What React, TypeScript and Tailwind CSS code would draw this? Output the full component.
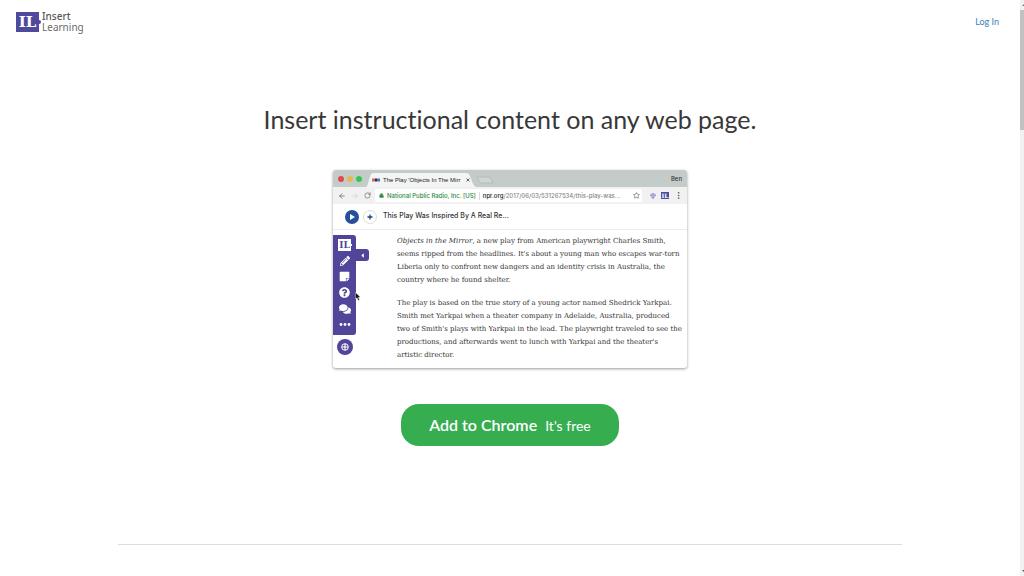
import { ArrowLeft, ArrowRight, EllipsisVertical, Gem, Lock, RotateCw, Star } from "lucide-react";
import { FaCaretLeft, FaComments, FaPencilAlt, FaQuestionCircle, FaStickyNote } from "react-icons/fa";

const paragraphs: { title?: string; lines: string[] }[] = [
  {
    title: "Objects in the Mirror",
    lines: [
      ", a new play from American playwright Charles Smith,",
      "seems ripped from the headlines. It's about a young man who escapes war-torn",
      "Liberia only to confront new dangers and an identity crisis in Australia, the",
      "country where he found shelter.",
    ],
  },
  {
    lines: [
      "The play is based on the true story of a young actor named Shedrick Yarkpai.",
      "Smith met Yarkpai when a theater company in Adelaide, Australia, produced",
      "two of Smith's plays with Yarkpai in the lead. The playwright traveled to see the",
      "productions, and afterwards went to lunch with Yarkpai and the theater's",
      "artistic director.",
    ],
  },
];

function Logo() {
  return (
    <a href="#" className="flex items-center font-['Noto_Sans',sans-serif]">
      <span className="relative flex h-5 w-[23px] items-center justify-center bg-[#4f4a9c] font-['DejaVu_Serif',serif] text-[15px] leading-5 font-bold text-white">
        IL
        <span className="absolute top-2 -right-0.5 size-1 rounded-full bg-[#4f4a9c]" />
      </span>
      <span className="ml-[3px] flex flex-col text-[10px] leading-[11px] text-[#6b6b6b]">
        <span className="font-medium text-[#555]">Insert</span>
        <span>Learning</span>
      </span>
    </a>
  );
}

function TabStrip() {
  return (
    <div className="flex h-[17px] items-end bg-[#c3ccc9] pr-[5px] pl-[5px]">
      <div className="flex gap-[3px] self-center">
        <span className="size-1.5 rounded-full bg-[#e4484f]" />
        <span className="size-1.5 rounded-full bg-[#e6b850]" />
        <span className="size-1.5 rounded-full bg-[#35c651]" />
      </div>
      <div className="relative ml-1 flex h-3.5 w-[110px] items-center pl-1.5">
        <svg viewBox="0 0 110 14" preserveAspectRatio="none" className="absolute inset-0 size-full" aria-hidden="true">
          <path d="M0 14C3 13 3 0 7 0H101C105 0 106 13 110 14Z" fill="#f3f4f4" />
        </svg>
        <svg viewBox="0 0 8 4" className="relative h-1 w-2" aria-hidden="true">
          <path d="M0 0.5H3V3.5H0Z" fill="#d9655f" />
          <path d="M3 0.5H5V3.5H3Z" fill="#333" />
          <path d="M5 0.5H8V3.5H5Z" fill="#4b77c4" />
        </svg>
        <span className="relative ml-[3px] w-[79px] font-['Liberation_Sans',sans-serif] text-[6px] leading-3 whitespace-nowrap text-[#222]">
          The Play 'Objects In The Mirr
        </span>
        <button aria-label="Close tab" className="relative ml-1 text-[#444]">
          <svg viewBox="0 0 4 4" className="size-1" aria-hidden="true"><path d="M0.5 0.5L3.5 3.5M3.5 0.5L0.5 3.5" stroke="currentColor" strokeWidth="0.8" /></svg>
        </button>
      </div>
      <svg viewBox="0 0 18 8" className="mb-[3px] h-2 w-[18px]" aria-hidden="true">
        <path d="M1 1H13Q14 1 15 3L17 7H5Q4 7 3 5Z" fill="#cfd6d4" stroke="#aab3b0" strokeWidth="0.7" />
      </svg>
      <span className="ml-auto self-center text-[6px] font-medium text-[#333]">Ben</span>
    </div>
  );
}

function AddressBar() {
  return (
    <div className="flex h-[17px] items-center bg-[#f1f1f2] pl-[5px] text-[#555]">
      <button aria-label="Back"><ArrowLeft size={8} /></button>
      <button aria-label="Forward" className="ml-[5px] text-[#d0d0d0]"><ArrowRight size={8} /></button>
      <button aria-label="Reload" className="ml-[5px]"><RotateCw size={7} /></button>
      <div className="ml-1 flex h-[13px] flex-1 items-center rounded-xs bg-white pr-0.5 pl-1 text-[6px] font-medium whitespace-nowrap">
        <Lock size={5} fill="#2c8a40" color="#2c8a40" />
        <span className="ml-[3px] text-[#2c8a40]">National Public Radio, Inc. [US]</span>
        <span className="mx-[3px] h-2 w-px bg-[#dcdcdc]" />
        <span className="text-[#858585]">
          <span className="text-[#222]">npr.org</span>/2017/06/03/531267534/this-play-was...
        </span>
        <button aria-label="Bookmark" className="ml-auto"><Star size={7} /></button>
      </div>
      <div className="mr-1 ml-2 flex items-center gap-[5px]">
        <Gem size={6} color="#7065bd" />
        <span className="flex h-[7px] w-2 items-center justify-center bg-[#4f4a9c] font-['DejaVu_Serif',serif] text-[6px] leading-[7px] font-bold text-white">IL</span>
        <button aria-label="Menu"><EllipsisVertical size={9} /></button>
      </div>
    </div>
  );
}

function PlayerRow() {
  return (
    <div className="flex h-[26px] items-center border-b border-[#ececec] pl-3">
      <button aria-label="Play" className="flex size-3.5 items-center justify-center rounded-full bg-[#24509a]">
        <svg viewBox="0 0 8 8" className="size-2" aria-hidden="true"><path d="M2 1L7 4L2 7Z" fill="#fff" /></svg>
      </button>
      <button aria-label="Add to queue" className="ml-1 flex size-3.5 items-center justify-center rounded-full border border-[#dddddd]">
        <svg viewBox="0 0 6 6" className="size-1.5" aria-hidden="true"><path d="M3 0.5V5.5M0.5 3H5.5" stroke="#24417c" strokeWidth="1.3" /></svg>
      </button>
      <span className="ml-1.5 text-[7px] font-medium text-[#333]">This Play Was Inspired By A Real Re...</span>
    </div>
  );
}

function ToolPalette() {
  return (
    <aside className="relative w-16 shrink-0 pt-[5px] text-white">
      <div className="flex items-start">
        <div className="flex w-[23px] flex-col items-center gap-[5px] rounded-r-[3px] bg-[#51459a] pt-1 pb-[5px]">
          <span className="relative flex h-3 w-[13px] items-center justify-center bg-white font-['DejaVu_Serif',serif] text-[9px] leading-3 font-bold text-[#51459a]">
            IL
            <span className="absolute top-[5px] -right-px size-0.5 bg-white" />
          </span>
          <button aria-label="Highlight"><FaPencilAlt size={10} /></button>
          <button aria-label="Sticky note"><FaStickyNote size={11} /></button>
          <button aria-label="Question"><FaQuestionCircle size={11} /></button>
          <button aria-label="Discussion"><FaComments size={12} /></button>
          <button aria-label="More">
            <svg viewBox="0 0 12 10" className="h-2.5 w-3" aria-hidden="true">
              <circle cx="2" cy="4.5" r="1.4" fill="#fff" />
              <circle cx="6" cy="4.5" r="1.4" fill="#fff" />
              <circle cx="10" cy="4.5" r="1.4" fill="#fff" />
            </svg>
          </button>
        </div>
        <button aria-label="Collapse" className="mt-3.5 flex h-3 w-[13px] items-center justify-center rounded-r-[3px] bg-[#51459a]">
          <FaCaretLeft size={7} />
        </button>
      </div>
      <button aria-label="Add" className="mt-1 ml-1 flex size-4 items-center justify-center rounded-full bg-[#51459a]">
        <svg viewBox="0 0 8 8" className="size-2" aria-hidden="true">
          <circle cx="4" cy="4" r="3.3" fill="none" stroke="#fff" strokeWidth="1" />
          <path d="M4 1V7M1 4H7" stroke="#fff" strokeWidth="1.2" />
        </svg>
      </button>
      <svg viewBox="0 0 6 9" className="absolute top-[62px] left-[22px] h-[9px] w-1.5" aria-hidden="true">
        <path d="M0.5 0.5V7L2.1 5.7L3.3 8.5L4.5 8L3.4 5.2H5.5Z" fill="#111" stroke="#fff" strokeWidth="0.4" />
      </svg>
    </aside>
  );
}

function Article() {
  return (
    <article className="flex flex-col gap-2.5 pt-[5px] font-['DejaVu_Serif',serif] text-[7px] leading-[13px] whitespace-nowrap text-[#333]">
      {paragraphs.map((p, i) => (
        <p key={i}>
          {p.title && <em>{p.title}</em>}
          {p.lines.map((line) => (
            <span key={line}>{line}<br /></span>
          ))}
        </p>
      ))}
    </article>
  );
}

function BrowserPreview() {
  return (
    <div className="w-full max-w-[354px] overflow-hidden rounded-[3px] bg-white font-['Inter',sans-serif] shadow-[0_1px_3px_rgba(0,0,0,0.4)]">
      <TabStrip />
      <AddressBar />
      <PlayerRow />
      <div className="flex pb-1.5">
        <ToolPalette />
        <Article />
      </div>
    </div>
  );
}

export default function App() {
  return (
    <div className="flex min-h-screen bg-white font-['Lato',sans-serif]">
      <div className="flex flex-1 flex-col">
        <header className="flex items-center justify-between pt-[11px] pr-[21px] pl-4">
          <Logo />
          <a href="#" className="text-[9px] text-[#3b7fb8]">Log In</a>
        </header>
        <main className="flex flex-1 flex-col items-center px-5 pt-[70px]">
          <h1 className="text-center text-[25px] leading-8 text-[#383838] [font-variant-ligatures:none]">
            Insert instructional content on any web page.
          </h1>
          <div className="mt-[35px] flex w-full justify-center">
            <BrowserPreview />
          </div>
          <button className="mt-9 flex h-[42px] items-baseline gap-2 rounded-[18px] bg-[#36ae50] px-7 leading-[42px] text-white">
            <span className="text-[16px] font-semibold">Add to Chrome</span>
            <span className="text-[14px]">It's free</span>
          </button>
          <hr className="mt-[98px] mb-[30px] w-4/5 border-[#dddddd]" />
        </main>
      </div>
      <div className="flex w-1 flex-col items-center bg-[#f1f1f1]" aria-hidden="true">
        <svg viewBox="0 0 4 10" className="h-2.5 w-1"><path d="M2 6L4 4V6Z" fill="#777" /></svg>
        <span className="h-[120px] w-full bg-[#c1c1c1]" />
        <svg viewBox="0 0 4 10" className="mt-auto h-2.5 w-1"><path d="M2 4H4V6Z" fill="#555" /></svg>
      </div>
    </div>
  );
}
